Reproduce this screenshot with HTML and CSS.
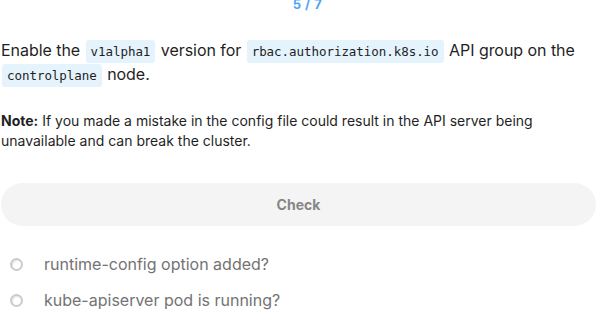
FILE: index.html
```html
<!DOCTYPE html>
<html>
<head>
<meta charset="utf-8">
<link rel="stylesheet" href="styles.css">
</head>
<body>
<div class="page">
  <div class="counter">5 / 7</div>
  <p class="task">Enable the <code class="chip">v1alpha1</code> version for <code class="chip">rbac.authorization.k8s.io</code> API group on the <code class="chip">controlplane</code> node.</p>
  <p class="note"><strong>Note:</strong> If you made a mistake in the config file could result in the API server being unavailable and can break the cluster.</p>
  <button class="check">Check</button>
  <ul class="checks">
    <li class="item"><span class="radio"></span><span class="label">runtime-config option added?</span></li>
    <li class="item"><span class="radio"></span><span class="label">kube-apiserver pod is running?</span></li>
  </ul>
</div>
</body>
</html>
```
FILE: styles.css
```css
html, body {
  margin: 0;
  padding: 0;
  background: #ffffff;
}
body {
  font-family: Inter, "Noto Sans", sans-serif;
  color: #1f1f1f;
}
.page {
  width: 595px;
  margin-left: 1px;
}
.counter {
  margin-top: -2px;
  height: 12px;
  line-height: 12px;
  font-size: 13px;
  font-weight: 700;
  color: #4ea6f3;
  text-align: center;
  padding-left: 18px;
  letter-spacing: 0.5px;
}
.task {
  margin: 28px 0 0;
  font-size: 16px;
  line-height: 24px;
  letter-spacing: -0.05px;
}
.chip {
  font-family: "DejaVu Sans Mono", monospace;
  font-size: 12.5px;
  line-height: 14px;
  background: #e5f3fd;
  border-radius: 3px;
  padding: 4px 5px;
  margin: 0 1px;
  color: #1f1f1f;
}
.note {
  margin: 25px 0 0;
  font-size: 14px;
  line-height: 20px;
}
.note strong {
  font-weight: 700;
}
.check {
  display: block;
  width: 595px;
  height: 43px;
  margin: 32px 0 0;
  border: none;
  border-radius: 22px;
  background: #f4f4f4;
  font-family: Inter, "Noto Sans", sans-serif;
  font-size: 14px;
  font-weight: 700;
  color: #868686;
  padding: 0;
}
.checks {
  list-style: none;
  margin: 20px 0 0;
  padding: 0;
}
.item {
  display: flex;
  align-items: center;
  height: 36px;
}
.radio {
  box-sizing: border-box;
  width: 13px;
  height: 13px;
  border-radius: 50%;
  border: 2px solid #cbcbcb;
  box-shadow: inset 1px 1px 1px rgba(0,0,0,0.1);
  margin-left: 9px;
  margin-right: 21px;
  flex: none;
}
.label {
  font-size: 16px;
  color: #737373;
}
```
